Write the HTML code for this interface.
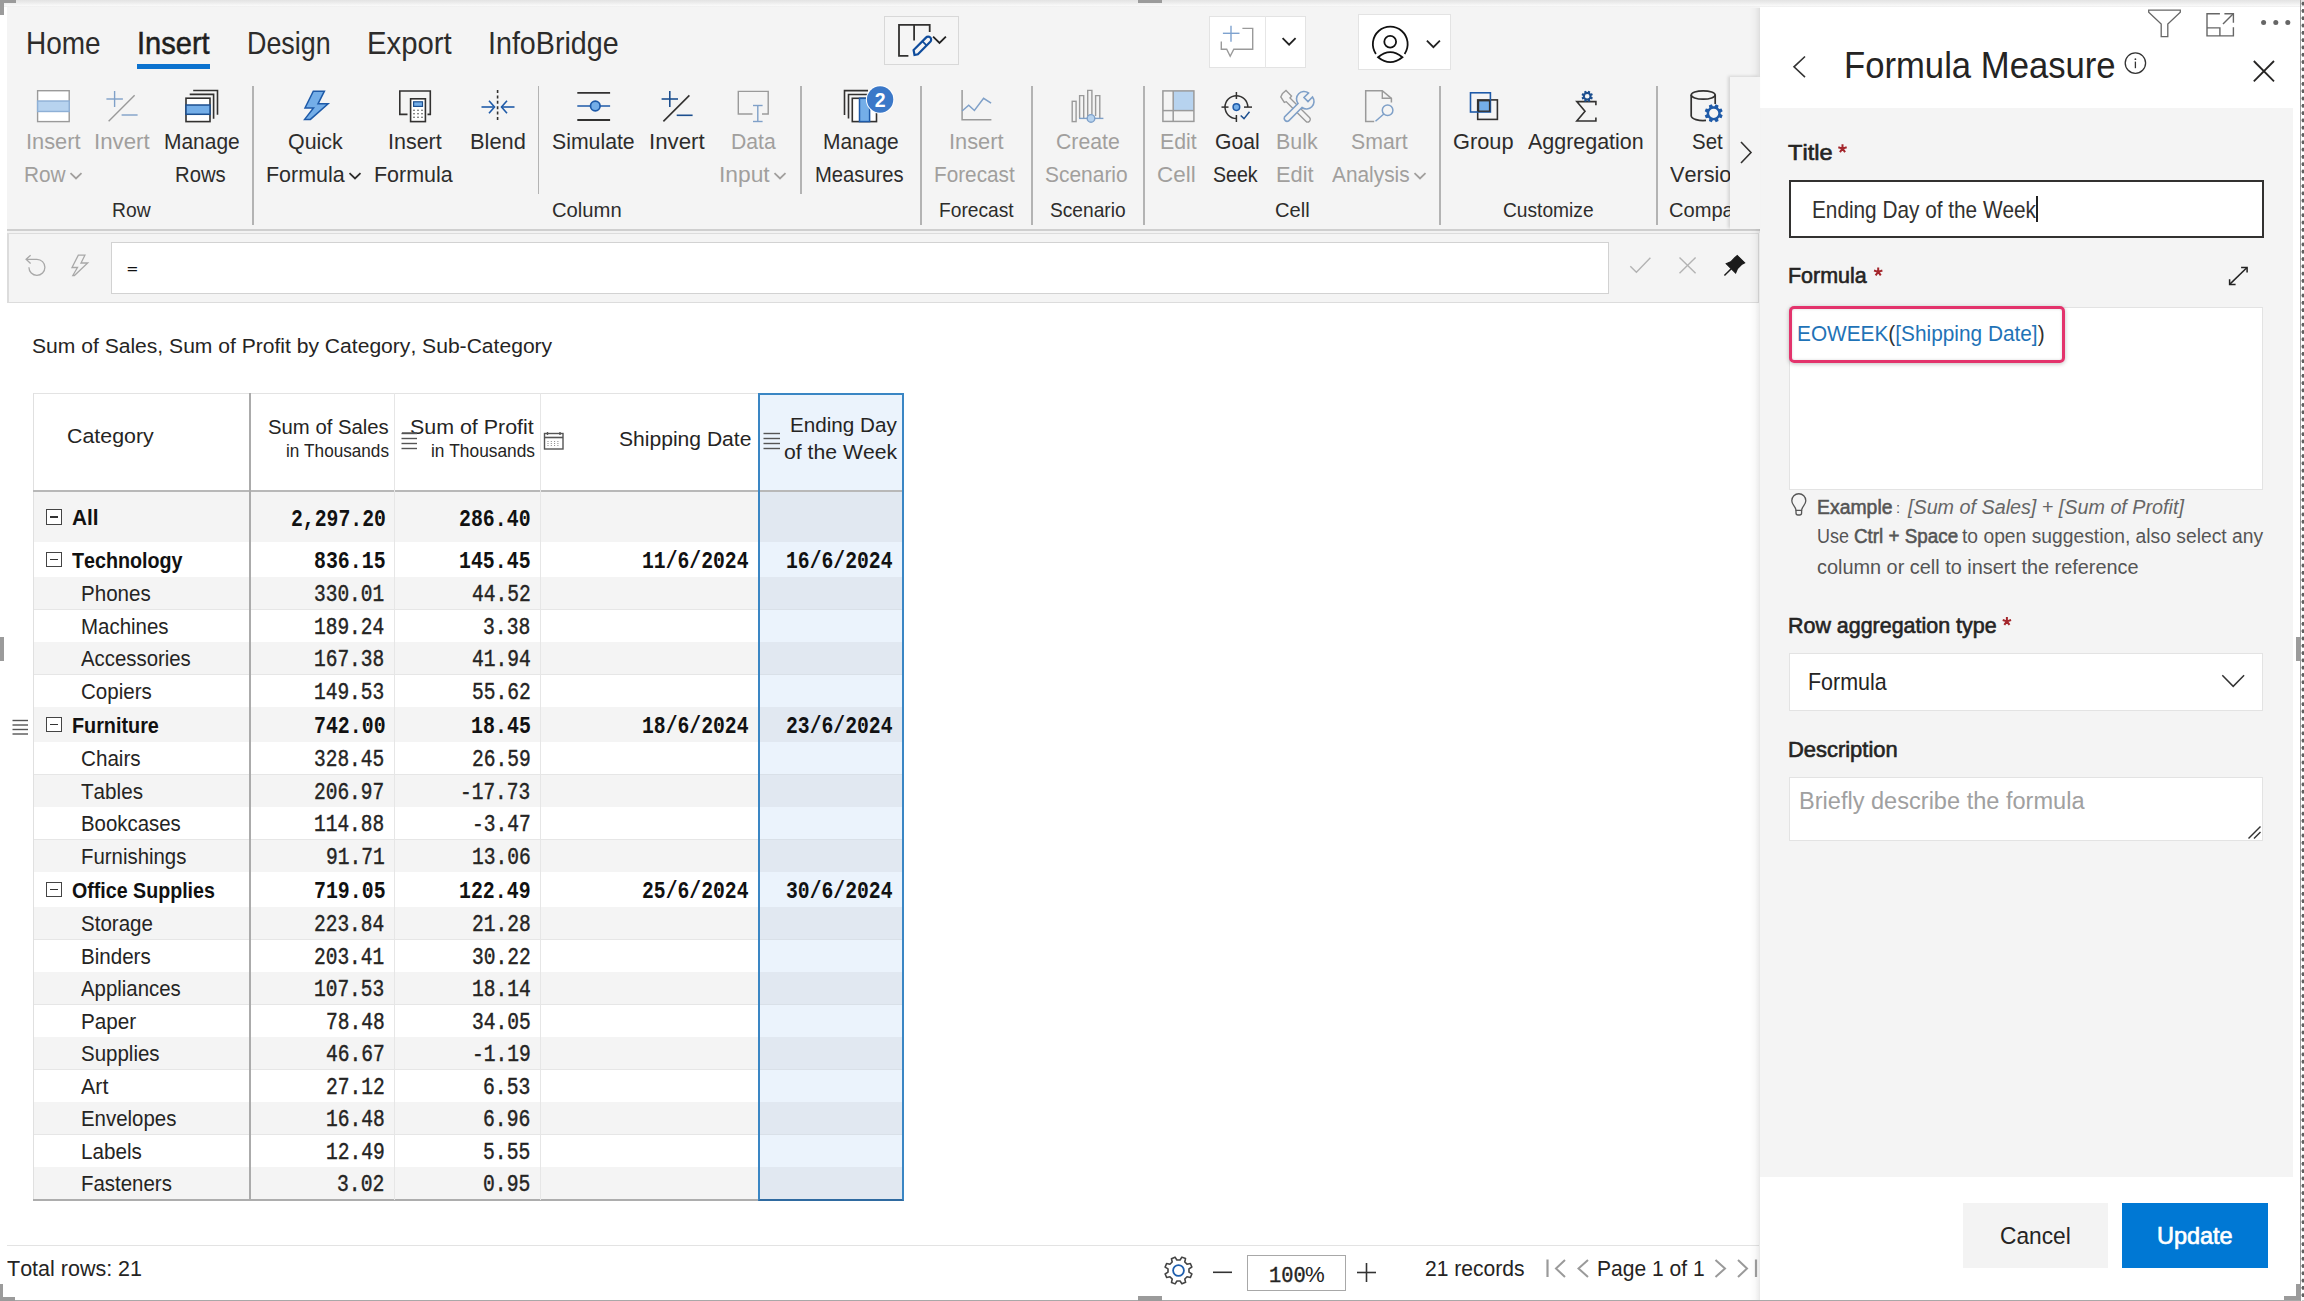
<!DOCTYPE html>
<html><head><meta charset="utf-8"><title>Formula Measure</title>
<style>
html,body{margin:0;padding:0;width:2304px;height:1301px;overflow:hidden;background:#fff}
body{position:relative;font-family:"Liberation Sans",sans-serif;font-kerning:none}
.t{position:absolute;line-height:1;white-space:nowrap;transform-origin:0 0}
.r{position:absolute;box-sizing:border-box}
svg.r{overflow:visible}
</style></head><body>
<div class="r" style="left:0.00px;top:0.00px;width:2304.00px;height:1301.00px;background:#fff"></div>
<div class="r" style="left:7.00px;top:7.00px;width:1753.00px;height:223.00px;background:#f4f4f4"></div>
<div class="r" style="left:0.00px;top:0.00px;width:2304.00px;height:7.00px;background:linear-gradient(#e3e3e3,#eeeeee 45%,#f8f8f8 78%,#ededed)"></div>
<div class="r" style="left:7.00px;top:229.40px;width:1753.00px;height:2.00px;background:#cfcfcf"></div>
<div class="r" style="left:7.00px;top:231.40px;width:1753.00px;height:1.60px;background:#f2f2f2"></div>
<div class="r" style="left:7.00px;top:233.00px;width:1752.00px;height:70.00px;background:#f4f4f4;border:1.2px solid #dcdcdc;border-left-width:2px;box-sizing:border-box"></div>
<div class="r" style="left:111.00px;top:242.00px;width:1498.00px;height:52.00px;background:#fff;border:1px solid #d2d2d2;box-sizing:border-box"></div>
<div class="r" style="left:7.00px;top:1244.50px;width:1752.00px;height:1.50px;background:#e3e3e3"></div>
<div class="r" style="left:1760.00px;top:7.00px;width:533.00px;height:100.50px;background:#fff"></div>
<div class="r" style="left:1760.00px;top:107.50px;width:533.00px;height:1069.50px;background:#f4f4f4"></div>
<div class="r" style="left:1749.00px;top:8.00px;width:11.00px;height:1293.00px;background:linear-gradient(90deg,rgba(0,0,0,0),rgba(0,0,0,0.025) 55%,rgba(0,0,0,0.07) 90%,rgba(0,0,0,0.1))"></div>
<div class="r" style="left:2300.00px;top:0.00px;width:1.00px;height:1301.00px;background:#9a9a9a"></div>
<div class="r" style="left:2301px;top:0;width:3px;height:1301px;background:radial-gradient(circle at 2.2px 3.6px,#606060 1.6px,transparent 1.9px) 0 0/3px 7.3px"></div>
<div class="r" style="left:0.00px;top:1299.50px;width:2300.00px;height:1.50px;background:#a8a8a8"></div>
<div class="r" style="left:0.00px;top:0.00px;width:15.50px;height:3.00px;background:#9b9b9b"></div>
<div class="r" style="left:0.00px;top:0.00px;width:3.50px;height:15.00px;background:#9b9b9b"></div>
<div class="r" style="left:0.00px;top:637.00px;width:3.50px;height:24.00px;background:#9b9b9b"></div>
<div class="r" style="left:0.00px;top:1284.00px;width:3.00px;height:17.00px;background:#9b9b9b"></div>
<div class="r" style="left:0.00px;top:1297.00px;width:15.00px;height:4.00px;background:#9b9b9b"></div>
<div class="r" style="left:1138.00px;top:0.00px;width:24.00px;height:3.00px;background:#9b9b9b"></div>
<div class="r" style="left:1138.00px;top:1296.00px;width:24.00px;height:5.00px;background:#9b9b9b"></div>
<div class="r" style="left:2296.00px;top:637.00px;width:4.50px;height:24.00px;background:#9b9b9b"></div>
<div class="r" style="left:2296.00px;top:1284.00px;width:4.50px;height:16.00px;background:#9b9b9b"></div>
<div class="r" style="left:2283.50px;top:1296.00px;width:17.00px;height:4.00px;background:#9b9b9b"></div>
<div class="t" style="left:26.00px;top:28.15px;font-size:30.52px;font-family:'Liberation Sans', sans-serif;color:#2d2c2b;transform:scaleX(0.9173);">Home</div>
<div class="t" style="left:247.00px;top:28.15px;font-size:30.52px;font-family:'Liberation Sans', sans-serif;color:#2d2c2b;transform:scaleX(0.8809);">Design</div>
<div class="t" style="left:367.00px;top:28.15px;font-size:30.52px;font-family:'Liberation Sans', sans-serif;color:#2d2c2b;transform:scaleX(0.9602);">Export</div>
<div class="t" style="left:488.00px;top:28.15px;font-size:30.52px;font-family:'Liberation Sans', sans-serif;color:#2d2c2b;transform:scaleX(0.9392);">InfoBridge</div>
<div class="t" style="left:137.00px;top:28.15px;font-size:30.52px;font-family:'Liberation Sans', sans-serif;color:#201f1e;transform:scaleX(0.9523);-webkit-text-stroke:0.5px #201f1e;">Insert</div>
<div class="r" style="left:137.00px;top:64.00px;width:73.00px;height:5.00px;background:#0b72cf"></div>
<div class="r" style="left:252.25px;top:86.00px;width:1.50px;height:139.00px;background:#b3b3b3"></div>
<div class="r" style="left:537.75px;top:86.00px;width:1.50px;height:108.00px;background:#b3b3b3"></div>
<div class="r" style="left:800.25px;top:86.00px;width:1.50px;height:108.00px;background:#b3b3b3"></div>
<div class="r" style="left:920.25px;top:86.00px;width:1.50px;height:139.00px;background:#b3b3b3"></div>
<div class="r" style="left:1031.25px;top:86.00px;width:1.50px;height:139.00px;background:#b3b3b3"></div>
<div class="r" style="left:1143.25px;top:86.00px;width:1.50px;height:139.00px;background:#b3b3b3"></div>
<div class="r" style="left:1439.25px;top:86.00px;width:1.50px;height:139.00px;background:#b3b3b3"></div>
<div class="r" style="left:1656.25px;top:86.00px;width:1.50px;height:139.00px;background:#b3b3b3"></div>
<div class="t" style="left:26.00px;top:130.53px;font-size:21.80px;font-family:'Liberation Sans', sans-serif;color:#a19f9d;">Insert</div>
<div class="t" style="left:24.00px;top:163.53px;font-size:21.80px;font-family:'Liberation Sans', sans-serif;color:#a19f9d;transform:scaleX(0.9549);">Row</div>
<svg class="r" style="left:69.00px;top:172.00px;" width="14.00" height="8.00" viewBox="0 0 14 8" fill="none"><path d="M1.5 1.2 L7 6.5 L12.5 1.2" stroke="#a19f9d" stroke-width="1.8"/></svg>
<div class="t" style="left:94.00px;top:130.53px;font-size:21.80px;font-family:'Liberation Sans', sans-serif;color:#a19f9d;transform:scaleX(1.0215);">Invert</div>
<div class="t" style="left:164.00px;top:130.53px;font-size:21.80px;font-family:'Liberation Sans', sans-serif;color:#2d2c2b;transform:scaleX(0.9607);">Manage</div>
<div class="t" style="left:175.00px;top:163.53px;font-size:21.80px;font-family:'Liberation Sans', sans-serif;color:#2d2c2b;transform:scaleX(0.9298);">Rows</div>
<div class="t" style="left:288.00px;top:130.53px;font-size:21.80px;font-family:'Liberation Sans', sans-serif;color:#2d2c2b;transform:scaleX(0.9808);">Quick</div>
<div class="t" style="left:266.00px;top:163.53px;font-size:21.80px;font-family:'Liberation Sans', sans-serif;color:#2d2c2b;transform:scaleX(0.9841);">Formula</div>
<svg class="r" style="left:348.00px;top:172.00px;" width="14.00" height="8.00" viewBox="0 0 14 8" fill="none"><path d="M1.5 1.2 L7 6.5 L12.5 1.2" stroke="#2d2c2b" stroke-width="1.8"/></svg>
<div class="t" style="left:388.00px;top:130.53px;font-size:21.80px;font-family:'Liberation Sans', sans-serif;color:#2d2c2b;transform:scaleX(0.9848);">Insert</div>
<div class="t" style="left:374.00px;top:163.53px;font-size:21.80px;font-family:'Liberation Sans', sans-serif;color:#2d2c2b;transform:scaleX(0.9841);">Formula</div>
<div class="t" style="left:470.00px;top:130.53px;font-size:21.80px;font-family:'Liberation Sans', sans-serif;color:#2d2c2b;">Blend</div>
<div class="t" style="left:552.00px;top:130.53px;font-size:21.80px;font-family:'Liberation Sans', sans-serif;color:#2d2c2b;transform:scaleX(0.9749);">Simulate</div>
<div class="t" style="left:649.00px;top:130.53px;font-size:21.80px;font-family:'Liberation Sans', sans-serif;color:#2d2c2b;transform:scaleX(1.0215);">Invert</div>
<div class="t" style="left:731.00px;top:130.53px;font-size:21.80px;font-family:'Liberation Sans', sans-serif;color:#a19f9d;transform:scaleX(0.9703);">Data</div>
<div class="t" style="left:719.00px;top:163.53px;font-size:21.80px;font-family:'Liberation Sans', sans-serif;color:#a19f9d;transform:scaleX(1.0456);">Input</div>
<svg class="r" style="left:773.00px;top:172.00px;" width="14.00" height="8.00" viewBox="0 0 14 8" fill="none"><path d="M1.5 1.2 L7 6.5 L12.5 1.2" stroke="#a19f9d" stroke-width="1.8"/></svg>
<div class="t" style="left:823.00px;top:130.53px;font-size:21.80px;font-family:'Liberation Sans', sans-serif;color:#2d2c2b;transform:scaleX(0.9607);">Manage</div>
<div class="t" style="left:815.00px;top:163.53px;font-size:21.80px;font-family:'Liberation Sans', sans-serif;color:#2d2c2b;transform:scaleX(0.9265);">Measures</div>
<div class="t" style="left:949.00px;top:130.53px;font-size:21.80px;font-family:'Liberation Sans', sans-serif;color:#a19f9d;">Insert</div>
<div class="t" style="left:934.00px;top:163.53px;font-size:21.80px;font-family:'Liberation Sans', sans-serif;color:#a19f9d;transform:scaleX(0.9515);">Forecast</div>
<div class="t" style="left:1056.00px;top:130.53px;font-size:21.80px;font-family:'Liberation Sans', sans-serif;color:#a19f9d;transform:scaleX(0.9736);">Create</div>
<div class="t" style="left:1045.00px;top:163.53px;font-size:21.80px;font-family:'Liberation Sans', sans-serif;color:#a19f9d;transform:scaleX(0.9610);">Scenario</div>
<div class="t" style="left:1160.00px;top:130.53px;font-size:21.80px;font-family:'Liberation Sans', sans-serif;color:#a19f9d;transform:scaleX(0.9770);">Edit</div>
<div class="t" style="left:1157.00px;top:163.53px;font-size:21.80px;font-family:'Liberation Sans', sans-serif;color:#a19f9d;transform:scaleX(1.0302);">Cell</div>
<div class="t" style="left:1215.00px;top:130.53px;font-size:21.80px;font-family:'Liberation Sans', sans-serif;color:#2d2c2b;transform:scaleX(0.9708);">Goal</div>
<div class="t" style="left:1213.00px;top:163.53px;font-size:21.80px;font-family:'Liberation Sans', sans-serif;color:#2d2c2b;transform:scaleX(0.8988);">Seek</div>
<div class="t" style="left:1276.00px;top:130.53px;font-size:21.80px;font-family:'Liberation Sans', sans-serif;color:#a19f9d;transform:scaleX(0.9824);">Bulk</div>
<div class="t" style="left:1276.00px;top:163.53px;font-size:21.80px;font-family:'Liberation Sans', sans-serif;color:#a19f9d;">Edit</div>
<div class="t" style="left:1351.00px;top:130.53px;font-size:21.80px;font-family:'Liberation Sans', sans-serif;color:#a19f9d;transform:scaleX(0.9751);">Smart</div>
<div class="t" style="left:1332.00px;top:163.53px;font-size:21.80px;font-family:'Liberation Sans', sans-serif;color:#a19f9d;transform:scaleX(0.9570);">Analysis</div>
<svg class="r" style="left:1413.00px;top:172.00px;" width="14.00" height="8.00" viewBox="0 0 14 8" fill="none"><path d="M1.5 1.2 L7 6.5 L12.5 1.2" stroke="#a19f9d" stroke-width="1.8"/></svg>
<div class="t" style="left:1453.00px;top:130.53px;font-size:21.80px;font-family:'Liberation Sans', sans-serif;color:#2d2c2b;">Group</div>
<div class="t" style="left:1528.00px;top:130.53px;font-size:21.80px;font-family:'Liberation Sans', sans-serif;color:#2d2c2b;transform:scaleX(0.9840);">Aggregation</div>
<div class="t" style="left:1692.00px;top:130.53px;font-size:21.80px;font-family:'Liberation Sans', sans-serif;color:#2d2c2b;transform:scaleX(0.9381);">Set</div>
<div class="t" style="left:112.00px;top:201.38px;font-size:19.62px;font-family:'Liberation Sans', sans-serif;color:#2d2c2b;transform:scaleX(0.9847);">Row</div>
<div class="t" style="left:552.00px;top:201.38px;font-size:19.62px;font-family:'Liberation Sans', sans-serif;color:#2d2c2b;transform:scaleX(1.0308);">Column</div>
<div class="t" style="left:939.00px;top:201.38px;font-size:19.62px;font-family:'Liberation Sans', sans-serif;color:#2d2c2b;transform:scaleX(0.9786);">Forecast</div>
<div class="t" style="left:1050.00px;top:201.38px;font-size:19.62px;font-family:'Liberation Sans', sans-serif;color:#2d2c2b;transform:scaleX(0.9774);">Scenario</div>
<div class="t" style="left:1275.00px;top:201.38px;font-size:19.62px;font-family:'Liberation Sans', sans-serif;color:#2d2c2b;transform:scaleX(1.0264);">Cell</div>
<div class="t" style="left:1503.00px;top:201.38px;font-size:19.62px;font-family:'Liberation Sans', sans-serif;color:#2d2c2b;transform:scaleX(0.9785);">Customize</div>
<div class="r" style="left:1660px;top:150px;width:71px;height:80px;overflow:hidden"><div class="t" style="left:10.00px;top:13.53px;font-size:21.80px;font-family:'Liberation Sans', sans-serif;color:#2d2c2b;transform:scaleX(0.9930);">Version</div><div class="t" style="left:9.00px;top:51.38px;font-size:19.62px;font-family:'Liberation Sans', sans-serif;color:#2d2c2b;transform:scaleX(1.0247);">Compare</div></div>
<div class="r" style="left:1730.00px;top:76.50px;width:30.00px;height:152.50px;background:#f4f4f4;box-shadow:-2px -1px 3px rgba(0,0,0,0.13)"></div>
<svg class="r" style="left:1738.00px;top:140.00px;" width="16.00" height="25.00" viewBox="0 0 16 25" fill="none"><path d="M3 2 L13 12.5 L3 23" stroke="#323130" stroke-width="1.6"/></svg>
<div class="r" style="left:884.00px;top:16.00px;width:75.00px;height:49.00px;background:#f5f5f5;border:1.5px solid #d8d8d8;box-sizing:border-box"></div>
<div class="r" style="left:1209.00px;top:16.00px;width:97.00px;height:52.00px;background:#fff;border:1.5px solid #e3e3e3;box-sizing:border-box"></div>
<div class="r" style="left:1264.50px;top:16.00px;width:1.50px;height:52.00px;background:#e6e6e6"></div>
<div class="r" style="left:1358.00px;top:14.00px;width:93.00px;height:56.00px;background:#fff;border:1.5px solid #e3e3e3;box-sizing:border-box"></div>
<div class="t" style="left:127.00px;top:265.38px;font-size:10.17px;font-family:'Liberation Sans', sans-serif;color:#111;font-weight:bold;transform:scaleX(1.8008);">=</div>
<div class="t" style="left:32.00px;top:335.15px;font-size:21.08px;font-family:'Liberation Sans', sans-serif;color:#252423;">Sum of Sales, Sum of Profit by Category, Sub-Category</div>
<div class="t" style="left:7.00px;top:1257.92px;font-size:22.53px;font-family:'Liberation Sans', sans-serif;color:#252423;transform:scaleX(0.9548);">Total rows: 21</div>
<div class="t" style="left:1425.00px;top:1257.92px;font-size:22.53px;font-family:'Liberation Sans', sans-serif;color:#252423;transform:scaleX(0.9366);">21 records</div>
<div class="t" style="left:1597.00px;top:1257.92px;font-size:22.53px;font-family:'Liberation Sans', sans-serif;color:#252423;transform:scaleX(0.9346);">Page 1 of 1</div>
<div class="r" style="left:1247.00px;top:1255.00px;width:99.00px;height:36.00px;background:#fff;border:1.5px solid #a8a8a8;box-sizing:border-box"></div>
<div class="t" style="left:1269.00px;top:1264.56px;font-size:22.76px;font-family:'Liberation Mono', monospace;color:#252423;transform:scaleX(0.8958);-webkit-text-stroke:0.4px #252423;">100</div>
<div class="t" style="left:1305.00px;top:1263.53px;font-size:21.80px;font-family:'Liberation Sans', sans-serif;color:#252423;transform:scaleX(1.0164);">%</div>
<div class="t" style="left:1844.00px;top:47.72px;font-size:36.34px;font-family:'Liberation Sans', sans-serif;color:#252423;transform:scaleX(0.9542);">Formula Measure</div>
<div class="t" style="left:1788.00px;top:141.92px;font-size:22.53px;font-family:'Liberation Sans', sans-serif;color:#252423;transform:scaleX(1.0474);-webkit-text-stroke:0.63px #252423;">Title</div>
<div class="r" style="left:1789.00px;top:180.00px;width:475.00px;height:58.00px;background:#fff;border:2px solid #323130;box-sizing:border-box"></div>
<div class="t" style="left:1812.00px;top:198.07px;font-size:24.71px;font-family:'Liberation Sans', sans-serif;color:#323130;transform:scaleX(0.8408);">Ending Day of the Week</div>
<div class="r" style="left:2036.00px;top:196.00px;width:2.00px;height:26.00px;background:#222"></div>
<div class="t" style="left:1788.00px;top:264.92px;font-size:22.53px;font-family:'Liberation Sans', sans-serif;color:#252423;transform:scaleX(0.9524);-webkit-text-stroke:0.63px #252423;">Formula</div>
<div class="r" style="left:1789.00px;top:307.00px;width:474.00px;height:183.00px;background:#fff;border:1.5px solid #e3e3e3;box-sizing:border-box"></div>
<div class="r" style="left:1789.00px;top:305.50px;width:275.50px;height:57.50px;border:3px solid #e3336c;border-radius:5px;box-sizing:border-box;box-shadow:0 1px 4px rgba(0,0,0,0.25), inset 0 0 3px rgba(0,0,0,0.15)"></div>
<div class="t" style="left:1797.00px;top:322.92px;font-size:22.53px;font-family:'Liberation Sans', sans-serif;color:#1f73b7;transform:scaleX(0.9244);">EOWEEK<span style="color:#323130">(</span>[Shipping Date]<span style="color:#323130">)</span></div>
<div class="t" style="left:1817.40px;top:496.76px;font-size:20.35px;font-family:'Liberation Sans', sans-serif;color:#555;transform:scaleX(0.9536);-webkit-text-stroke:0.57px #555;">Example</div>
<div class="t" style="left:1896.00px;top:502.30px;font-size:13.81px;font-family:'Liberation Sans', sans-serif;color:#555;transform:scaleX(1.0681);">:</div>
<div class="t" style="left:1908.39px;top:496.76px;font-size:20.35px;font-family:'Liberation Sans', sans-serif;color:#666;font-style:italic;transform:scaleX(0.9701);">[Sum of Sales] + [Sum of Profit]</div>
<div class="t" style="left:1817.40px;top:526.26px;font-size:20.35px;font-family:'Liberation Sans', sans-serif;color:#555;transform:scaleX(0.8817);">Use</div>
<div class="t" style="left:1853.80px;top:526.26px;font-size:20.35px;font-family:'Liberation Sans', sans-serif;color:#555;transform:scaleX(0.9260);-webkit-text-stroke:0.57px #555;">Ctrl + Space</div>
<div class="t" style="left:1961.50px;top:526.26px;font-size:20.35px;font-family:'Liberation Sans', sans-serif;color:#555;transform:scaleX(0.9475);">to open suggestion, also select any</div>
<div class="t" style="left:1817.00px;top:557.26px;font-size:20.35px;font-family:'Liberation Sans', sans-serif;color:#555;transform:scaleX(0.9774);">column or cell to insert the reference</div>
<div class="t" style="left:1788.00px;top:614.92px;font-size:22.53px;font-family:'Liberation Sans', sans-serif;color:#252423;transform:scaleX(0.9522);-webkit-text-stroke:0.63px #252423;">Row aggregation type</div>
<div class="r" style="left:1789.00px;top:653.00px;width:474.00px;height:57.50px;background:#fff;border:1.5px solid #e3e3e3;box-sizing:border-box"></div>
<div class="t" style="left:1808.00px;top:671.30px;font-size:23.26px;font-family:'Liberation Sans', sans-serif;color:#252423;transform:scaleX(0.9226);">Formula</div>
<div class="t" style="left:1788.00px;top:738.92px;font-size:22.53px;font-family:'Liberation Sans', sans-serif;color:#252423;transform:scaleX(0.9735);-webkit-text-stroke:0.63px #252423;">Description</div>
<div class="r" style="left:1789.00px;top:776.50px;width:474.00px;height:64.50px;background:#fff;border:1.5px solid #e3e3e3;box-sizing:border-box"></div>
<div class="t" style="left:1799.00px;top:788.69px;font-size:23.98px;font-family:'Liberation Sans', sans-serif;color:#a0a0a0;transform:scaleX(0.9831);">Briefly describe the formula</div>
<div class="r" style="left:1963.00px;top:1203.00px;width:145.00px;height:65.00px;background:#f3f3f3"></div>
<div class="t" style="left:2000.00px;top:1224.07px;font-size:24.71px;font-family:'Liberation Sans', sans-serif;color:#252423;transform:scaleX(0.9191);">Cancel</div>
<div class="r" style="left:2122.00px;top:1203.00px;width:145.50px;height:65.00px;background:#0078d4"></div>
<div class="t" style="left:2157.00px;top:1224.07px;font-size:24.71px;font-family:'Liberation Sans', sans-serif;color:#fff;transform:scaleX(0.9500);-webkit-text-stroke:0.69px #fff;">Update</div>
<div class="r" style="left:33.00px;top:393.00px;width:725.00px;height:1.00px;background:#e3e3e3"></div>
<div class="r" style="left:33.00px;top:393.00px;width:1.00px;height:808.00px;background:#e0e0e0"></div>
<div class="r" style="left:34.00px;top:492.00px;width:870.00px;height:50.00px;background:#f4f4f4"></div>
<div class="r" style="left:34.00px;top:542.00px;width:870.00px;height:35.00px;background:#ffffff"></div>
<div class="r" style="left:34.00px;top:577.00px;width:870.00px;height:32.50px;background:#f4f4f4"></div>
<div class="r" style="left:34.00px;top:609.10px;width:870.00px;height:1.00px;background:#e6e6e6"></div>
<div class="r" style="left:34.00px;top:609.50px;width:870.00px;height:32.50px;background:#ffffff"></div>
<div class="r" style="left:34.00px;top:641.60px;width:870.00px;height:1.00px;background:#e6e6e6"></div>
<div class="r" style="left:34.00px;top:642.00px;width:870.00px;height:32.50px;background:#f4f4f4"></div>
<div class="r" style="left:34.00px;top:674.10px;width:870.00px;height:1.00px;background:#e6e6e6"></div>
<div class="r" style="left:34.00px;top:674.50px;width:870.00px;height:32.50px;background:#ffffff"></div>
<div class="r" style="left:34.00px;top:706.60px;width:870.00px;height:1.00px;background:#e6e6e6"></div>
<div class="r" style="left:34.00px;top:707.00px;width:870.00px;height:35.00px;background:#f4f4f4"></div>
<div class="r" style="left:34.00px;top:742.00px;width:870.00px;height:32.50px;background:#ffffff"></div>
<div class="r" style="left:34.00px;top:774.10px;width:870.00px;height:1.00px;background:#e6e6e6"></div>
<div class="r" style="left:34.00px;top:774.50px;width:870.00px;height:32.50px;background:#f4f4f4"></div>
<div class="r" style="left:34.00px;top:806.60px;width:870.00px;height:1.00px;background:#e6e6e6"></div>
<div class="r" style="left:34.00px;top:807.00px;width:870.00px;height:32.50px;background:#ffffff"></div>
<div class="r" style="left:34.00px;top:839.10px;width:870.00px;height:1.00px;background:#e6e6e6"></div>
<div class="r" style="left:34.00px;top:839.50px;width:870.00px;height:32.50px;background:#f4f4f4"></div>
<div class="r" style="left:34.00px;top:871.60px;width:870.00px;height:1.00px;background:#e6e6e6"></div>
<div class="r" style="left:34.00px;top:872.00px;width:870.00px;height:35.00px;background:#ffffff"></div>
<div class="r" style="left:34.00px;top:907.00px;width:870.00px;height:32.50px;background:#f4f4f4"></div>
<div class="r" style="left:34.00px;top:939.10px;width:870.00px;height:1.00px;background:#e6e6e6"></div>
<div class="r" style="left:34.00px;top:939.50px;width:870.00px;height:32.50px;background:#ffffff"></div>
<div class="r" style="left:34.00px;top:971.60px;width:870.00px;height:1.00px;background:#e6e6e6"></div>
<div class="r" style="left:34.00px;top:972.00px;width:870.00px;height:32.50px;background:#f4f4f4"></div>
<div class="r" style="left:34.00px;top:1004.10px;width:870.00px;height:1.00px;background:#e6e6e6"></div>
<div class="r" style="left:34.00px;top:1004.50px;width:870.00px;height:32.50px;background:#ffffff"></div>
<div class="r" style="left:34.00px;top:1036.60px;width:870.00px;height:1.00px;background:#e6e6e6"></div>
<div class="r" style="left:34.00px;top:1037.00px;width:870.00px;height:32.50px;background:#f4f4f4"></div>
<div class="r" style="left:34.00px;top:1069.10px;width:870.00px;height:1.00px;background:#e6e6e6"></div>
<div class="r" style="left:34.00px;top:1069.50px;width:870.00px;height:32.50px;background:#ffffff"></div>
<div class="r" style="left:34.00px;top:1101.60px;width:870.00px;height:1.00px;background:#e6e6e6"></div>
<div class="r" style="left:34.00px;top:1102.00px;width:870.00px;height:32.50px;background:#f4f4f4"></div>
<div class="r" style="left:34.00px;top:1134.10px;width:870.00px;height:1.00px;background:#e6e6e6"></div>
<div class="r" style="left:34.00px;top:1134.50px;width:870.00px;height:32.50px;background:#ffffff"></div>
<div class="r" style="left:34.00px;top:1166.60px;width:870.00px;height:1.00px;background:#e6e6e6"></div>
<div class="r" style="left:34.00px;top:1167.00px;width:870.00px;height:32.50px;background:#f4f4f4"></div>
<div class="r" style="left:34.00px;top:1199.10px;width:870.00px;height:1.00px;background:#e6e6e6"></div>
<div class="r" style="left:758.00px;top:492.00px;width:146.00px;height:50.00px;background:#e1e8f1"></div>
<div class="r" style="left:758.00px;top:542.00px;width:146.00px;height:35.00px;background:#ebf3fc"></div>
<div class="r" style="left:758.00px;top:577.00px;width:146.00px;height:32.50px;background:#e1e8f1"></div>
<div class="r" style="left:758.00px;top:609.10px;width:146.00px;height:1.00px;background:#d9e0e8"></div>
<div class="r" style="left:758.00px;top:609.50px;width:146.00px;height:32.50px;background:#ebf3fc"></div>
<div class="r" style="left:758.00px;top:641.60px;width:146.00px;height:1.00px;background:#d9e0e8"></div>
<div class="r" style="left:758.00px;top:642.00px;width:146.00px;height:32.50px;background:#e1e8f1"></div>
<div class="r" style="left:758.00px;top:674.10px;width:146.00px;height:1.00px;background:#d9e0e8"></div>
<div class="r" style="left:758.00px;top:674.50px;width:146.00px;height:32.50px;background:#ebf3fc"></div>
<div class="r" style="left:758.00px;top:706.60px;width:146.00px;height:1.00px;background:#d9e0e8"></div>
<div class="r" style="left:758.00px;top:707.00px;width:146.00px;height:35.00px;background:#e1e8f1"></div>
<div class="r" style="left:758.00px;top:742.00px;width:146.00px;height:32.50px;background:#ebf3fc"></div>
<div class="r" style="left:758.00px;top:774.10px;width:146.00px;height:1.00px;background:#d9e0e8"></div>
<div class="r" style="left:758.00px;top:774.50px;width:146.00px;height:32.50px;background:#e1e8f1"></div>
<div class="r" style="left:758.00px;top:806.60px;width:146.00px;height:1.00px;background:#d9e0e8"></div>
<div class="r" style="left:758.00px;top:807.00px;width:146.00px;height:32.50px;background:#ebf3fc"></div>
<div class="r" style="left:758.00px;top:839.10px;width:146.00px;height:1.00px;background:#d9e0e8"></div>
<div class="r" style="left:758.00px;top:839.50px;width:146.00px;height:32.50px;background:#e1e8f1"></div>
<div class="r" style="left:758.00px;top:871.60px;width:146.00px;height:1.00px;background:#d9e0e8"></div>
<div class="r" style="left:758.00px;top:872.00px;width:146.00px;height:35.00px;background:#ebf3fc"></div>
<div class="r" style="left:758.00px;top:907.00px;width:146.00px;height:32.50px;background:#e1e8f1"></div>
<div class="r" style="left:758.00px;top:939.10px;width:146.00px;height:1.00px;background:#d9e0e8"></div>
<div class="r" style="left:758.00px;top:939.50px;width:146.00px;height:32.50px;background:#ebf3fc"></div>
<div class="r" style="left:758.00px;top:971.60px;width:146.00px;height:1.00px;background:#d9e0e8"></div>
<div class="r" style="left:758.00px;top:972.00px;width:146.00px;height:32.50px;background:#e1e8f1"></div>
<div class="r" style="left:758.00px;top:1004.10px;width:146.00px;height:1.00px;background:#d9e0e8"></div>
<div class="r" style="left:758.00px;top:1004.50px;width:146.00px;height:32.50px;background:#ebf3fc"></div>
<div class="r" style="left:758.00px;top:1036.60px;width:146.00px;height:1.00px;background:#d9e0e8"></div>
<div class="r" style="left:758.00px;top:1037.00px;width:146.00px;height:32.50px;background:#e1e8f1"></div>
<div class="r" style="left:758.00px;top:1069.10px;width:146.00px;height:1.00px;background:#d9e0e8"></div>
<div class="r" style="left:758.00px;top:1069.50px;width:146.00px;height:32.50px;background:#ebf3fc"></div>
<div class="r" style="left:758.00px;top:1101.60px;width:146.00px;height:1.00px;background:#d9e0e8"></div>
<div class="r" style="left:758.00px;top:1102.00px;width:146.00px;height:32.50px;background:#e1e8f1"></div>
<div class="r" style="left:758.00px;top:1134.10px;width:146.00px;height:1.00px;background:#d9e0e8"></div>
<div class="r" style="left:758.00px;top:1134.50px;width:146.00px;height:32.50px;background:#ebf3fc"></div>
<div class="r" style="left:758.00px;top:1166.60px;width:146.00px;height:1.00px;background:#d9e0e8"></div>
<div class="r" style="left:758.00px;top:1167.00px;width:146.00px;height:32.50px;background:#e1e8f1"></div>
<div class="r" style="left:758.00px;top:1199.10px;width:146.00px;height:1.00px;background:#d9e0e8"></div>
<div class="r" style="left:758.00px;top:393.00px;width:146.00px;height:98.00px;background:#ebf3fc"></div>
<div class="r" style="left:33.00px;top:490.00px;width:871.00px;height:2.00px;background:#b8b8b8"></div>
<div class="r" style="left:33.00px;top:1199.00px;width:871.00px;height:1.50px;background:#adadad"></div>
<div class="r" style="left:249.00px;top:393.00px;width:2.00px;height:806.50px;background:#ababab"></div>
<div class="r" style="left:394.00px;top:393.00px;width:1.00px;height:806.50px;background:#e6e6e6"></div>
<div class="r" style="left:539.50px;top:393.00px;width:1.00px;height:806.50px;background:#e6e6e6"></div>
<div class="r" style="left:758.00px;top:392.50px;width:146.00px;height:808.00px;border:2px solid #3a86c4;border-bottom-color:#2f6aa0;box-sizing:border-box"></div>
<div class="t" style="left:67.00px;top:425.15px;font-size:21.08px;font-family:'Liberation Sans', sans-serif;color:#252423;transform:scaleX(1.0137);">Category</div>
<div class="t" style="left:268.00px;top:416.15px;font-size:21.08px;font-family:'Liberation Sans', sans-serif;color:#252423;transform:scaleX(0.9630);">Sum of Sales</div>
<div class="t" style="left:286.00px;top:442.00px;font-size:18.90px;font-family:'Liberation Sans', sans-serif;color:#252423;transform:scaleX(0.9080);">in Thousands</div>
<div class="t" style="left:410.00px;top:416.15px;font-size:21.08px;font-family:'Liberation Sans', sans-serif;color:#252423;transform:scaleX(1.0155);">Sum of Profit</div>
<div class="t" style="left:431.00px;top:442.00px;font-size:18.90px;font-family:'Liberation Sans', sans-serif;color:#252423;transform:scaleX(0.9168);">in Thousands</div>
<div class="t" style="left:619.00px;top:428.15px;font-size:21.08px;font-family:'Liberation Sans', sans-serif;color:#252423;">Shipping Date</div>
<div class="t" style="left:790.00px;top:413.65px;font-size:21.08px;font-family:'Liberation Sans', sans-serif;color:#252423;transform:scaleX(0.9793);">Ending Day</div>
<div class="t" style="left:784.00px;top:441.15px;font-size:21.08px;font-family:'Liberation Sans', sans-serif;color:#252423;transform:scaleX(1.0052);">of the Week</div>
<div class="t" style="left:72.00px;top:507.23px;font-size:21.80px;font-family:'Liberation Sans', sans-serif;color:#111;font-weight:bold;transform:scaleX(0.9510);">All</div>
<div class="r" style="left:46.00px;top:509.30px;width:15.50px;height:15.50px;border:1.5px solid #444;box-sizing:border-box;background:#fff"></div>
<div class="r" style="left:49.50px;top:516.40px;width:8.50px;height:1.50px;background:#333"></div>
<div class="t" style="left:290.84px;top:507.68px;font-size:23.52px;font-family:'Liberation Mono', monospace;color:#111;font-weight:bold;transform:scaleX(0.8401);">2,297.20</div>
<div class="t" style="left:459.12px;top:507.68px;font-size:23.52px;font-family:'Liberation Mono', monospace;color:#111;font-weight:bold;transform:scaleX(0.8451);">286.40</div>
<div class="t" style="left:72.00px;top:549.73px;font-size:21.80px;font-family:'Liberation Sans', sans-serif;color:#111;font-weight:bold;transform:scaleX(0.9041);">Technology</div>
<div class="r" style="left:46.00px;top:551.80px;width:15.50px;height:15.50px;border:1.5px solid #444;box-sizing:border-box;background:#fff"></div>
<div class="r" style="left:49.50px;top:558.90px;width:8.50px;height:1.50px;background:#333"></div>
<div class="t" style="left:314.12px;top:550.18px;font-size:23.52px;font-family:'Liberation Mono', monospace;color:#111;font-weight:bold;transform:scaleX(0.8451);">836.15</div>
<div class="t" style="left:459.12px;top:550.18px;font-size:23.52px;font-family:'Liberation Mono', monospace;color:#111;font-weight:bold;transform:scaleX(0.8451);">145.45</div>
<div class="t" style="left:641.70px;top:550.18px;font-size:23.52px;font-family:'Liberation Mono', monospace;color:#111;font-weight:bold;transform:scaleX(0.8384);">11/6/2024</div>
<div class="t" style="left:786.20px;top:550.18px;font-size:23.52px;font-family:'Liberation Mono', monospace;color:#111;font-weight:bold;transform:scaleX(0.8384);">16/6/2024</div>
<div class="t" style="left:81.00px;top:583.48px;font-size:21.80px;font-family:'Liberation Sans', sans-serif;color:#252423;transform:scaleX(0.9430);">Phones</div>
<div class="t" style="left:314.48px;top:584.28px;font-size:23.07px;font-family:'Liberation Mono', monospace;color:#252423;transform:scaleX(0.8455);-webkit-text-stroke:0.4px #252423;">330.01</div>
<div class="t" style="left:471.91px;top:584.28px;font-size:23.07px;font-family:'Liberation Mono', monospace;color:#252423;transform:scaleX(0.8496);-webkit-text-stroke:0.4px #252423;">44.52</div>
<div class="t" style="left:81.00px;top:615.98px;font-size:21.80px;font-family:'Liberation Sans', sans-serif;color:#252423;transform:scaleX(0.9382);">Machines</div>
<div class="t" style="left:314.48px;top:616.78px;font-size:23.07px;font-family:'Liberation Mono', monospace;color:#252423;transform:scaleX(0.8455);-webkit-text-stroke:0.4px #252423;">189.24</div>
<div class="t" style="left:483.33px;top:616.78px;font-size:23.07px;font-family:'Liberation Mono', monospace;color:#252423;transform:scaleX(0.8557);-webkit-text-stroke:0.4px #252423;">3.38</div>
<div class="t" style="left:81.00px;top:648.48px;font-size:21.80px;font-family:'Liberation Sans', sans-serif;color:#252423;transform:scaleX(0.9345);">Accessories</div>
<div class="t" style="left:314.48px;top:649.28px;font-size:23.07px;font-family:'Liberation Mono', monospace;color:#252423;transform:scaleX(0.8455);-webkit-text-stroke:0.4px #252423;">167.38</div>
<div class="t" style="left:471.91px;top:649.28px;font-size:23.07px;font-family:'Liberation Mono', monospace;color:#252423;transform:scaleX(0.8496);-webkit-text-stroke:0.4px #252423;">41.94</div>
<div class="t" style="left:81.00px;top:680.98px;font-size:21.80px;font-family:'Liberation Sans', sans-serif;color:#252423;transform:scaleX(0.9426);">Copiers</div>
<div class="t" style="left:314.48px;top:681.78px;font-size:23.07px;font-family:'Liberation Mono', monospace;color:#252423;transform:scaleX(0.8455);-webkit-text-stroke:0.4px #252423;">149.53</div>
<div class="t" style="left:471.91px;top:681.78px;font-size:23.07px;font-family:'Liberation Mono', monospace;color:#252423;transform:scaleX(0.8496);-webkit-text-stroke:0.4px #252423;">55.62</div>
<div class="t" style="left:72.00px;top:714.73px;font-size:21.80px;font-family:'Liberation Sans', sans-serif;color:#111;font-weight:bold;transform:scaleX(0.9078);">Furniture</div>
<div class="r" style="left:46.00px;top:716.80px;width:15.50px;height:15.50px;border:1.5px solid #444;box-sizing:border-box;background:#fff"></div>
<div class="r" style="left:49.50px;top:723.90px;width:8.50px;height:1.50px;background:#333"></div>
<div class="t" style="left:314.12px;top:715.18px;font-size:23.52px;font-family:'Liberation Mono', monospace;color:#111;font-weight:bold;transform:scaleX(0.8451);">742.00</div>
<div class="t" style="left:470.79px;top:715.18px;font-size:23.52px;font-family:'Liberation Mono', monospace;color:#111;font-weight:bold;transform:scaleX(0.8491);">18.45</div>
<div class="t" style="left:641.70px;top:715.18px;font-size:23.52px;font-family:'Liberation Mono', monospace;color:#111;font-weight:bold;transform:scaleX(0.8384);">18/6/2024</div>
<div class="t" style="left:786.20px;top:715.18px;font-size:23.52px;font-family:'Liberation Mono', monospace;color:#111;font-weight:bold;transform:scaleX(0.8384);">23/6/2024</div>
<div class="t" style="left:81.00px;top:748.48px;font-size:21.80px;font-family:'Liberation Sans', sans-serif;color:#252423;transform:scaleX(0.9470);">Chairs</div>
<div class="t" style="left:314.48px;top:749.28px;font-size:23.07px;font-family:'Liberation Mono', monospace;color:#252423;transform:scaleX(0.8455);-webkit-text-stroke:0.4px #252423;">328.45</div>
<div class="t" style="left:471.91px;top:749.28px;font-size:23.07px;font-family:'Liberation Mono', monospace;color:#252423;transform:scaleX(0.8496);-webkit-text-stroke:0.4px #252423;">26.59</div>
<div class="t" style="left:81.00px;top:780.98px;font-size:21.80px;font-family:'Liberation Sans', sans-serif;color:#252423;transform:scaleX(0.9470);">Tables</div>
<div class="t" style="left:314.48px;top:781.78px;font-size:23.07px;font-family:'Liberation Mono', monospace;color:#252423;transform:scaleX(0.8455);-webkit-text-stroke:0.4px #252423;">206.97</div>
<div class="t" style="left:460.48px;top:781.78px;font-size:23.07px;font-family:'Liberation Mono', monospace;color:#252423;transform:scaleX(0.8455);-webkit-text-stroke:0.4px #252423;">-17.73</div>
<div class="t" style="left:81.00px;top:813.48px;font-size:21.80px;font-family:'Liberation Sans', sans-serif;color:#252423;transform:scaleX(0.9359);">Bookcases</div>
<div class="t" style="left:314.48px;top:814.28px;font-size:23.07px;font-family:'Liberation Mono', monospace;color:#252423;transform:scaleX(0.8455);-webkit-text-stroke:0.4px #252423;">114.88</div>
<div class="t" style="left:471.91px;top:814.28px;font-size:23.07px;font-family:'Liberation Mono', monospace;color:#252423;transform:scaleX(0.8496);-webkit-text-stroke:0.4px #252423;">-3.47</div>
<div class="t" style="left:81.00px;top:845.98px;font-size:21.80px;font-family:'Liberation Sans', sans-serif;color:#252423;transform:scaleX(0.9351);">Furnishings</div>
<div class="t" style="left:325.91px;top:846.78px;font-size:23.07px;font-family:'Liberation Mono', monospace;color:#252423;transform:scaleX(0.8496);-webkit-text-stroke:0.4px #252423;">91.71</div>
<div class="t" style="left:471.91px;top:846.78px;font-size:23.07px;font-family:'Liberation Mono', monospace;color:#252423;transform:scaleX(0.8496);-webkit-text-stroke:0.4px #252423;">13.06</div>
<div class="t" style="left:72.00px;top:879.73px;font-size:21.80px;font-family:'Liberation Sans', sans-serif;color:#111;font-weight:bold;transform:scaleX(0.9007);">Office Supplies</div>
<div class="r" style="left:46.00px;top:881.80px;width:15.50px;height:15.50px;border:1.5px solid #444;box-sizing:border-box;background:#fff"></div>
<div class="r" style="left:49.50px;top:888.90px;width:8.50px;height:1.50px;background:#333"></div>
<div class="t" style="left:314.12px;top:880.18px;font-size:23.52px;font-family:'Liberation Mono', monospace;color:#111;font-weight:bold;transform:scaleX(0.8451);">719.05</div>
<div class="t" style="left:459.12px;top:880.18px;font-size:23.52px;font-family:'Liberation Mono', monospace;color:#111;font-weight:bold;transform:scaleX(0.8451);">122.49</div>
<div class="t" style="left:641.70px;top:880.18px;font-size:23.52px;font-family:'Liberation Mono', monospace;color:#111;font-weight:bold;transform:scaleX(0.8384);">25/6/2024</div>
<div class="t" style="left:786.20px;top:880.18px;font-size:23.52px;font-family:'Liberation Mono', monospace;color:#111;font-weight:bold;transform:scaleX(0.8384);">30/6/2024</div>
<div class="t" style="left:81.00px;top:913.48px;font-size:21.80px;font-family:'Liberation Sans', sans-serif;color:#252423;transform:scaleX(0.9423);">Storage</div>
<div class="t" style="left:314.48px;top:914.28px;font-size:23.07px;font-family:'Liberation Mono', monospace;color:#252423;transform:scaleX(0.8455);-webkit-text-stroke:0.4px #252423;">223.84</div>
<div class="t" style="left:471.91px;top:914.28px;font-size:23.07px;font-family:'Liberation Mono', monospace;color:#252423;transform:scaleX(0.8496);-webkit-text-stroke:0.4px #252423;">21.28</div>
<div class="t" style="left:81.00px;top:945.98px;font-size:21.80px;font-family:'Liberation Sans', sans-serif;color:#252423;transform:scaleX(0.9430);">Binders</div>
<div class="t" style="left:314.48px;top:946.78px;font-size:23.07px;font-family:'Liberation Mono', monospace;color:#252423;transform:scaleX(0.8455);-webkit-text-stroke:0.4px #252423;">203.41</div>
<div class="t" style="left:471.91px;top:946.78px;font-size:23.07px;font-family:'Liberation Mono', monospace;color:#252423;transform:scaleX(0.8496);-webkit-text-stroke:0.4px #252423;">30.22</div>
<div class="t" style="left:81.00px;top:978.48px;font-size:21.80px;font-family:'Liberation Sans', sans-serif;color:#252423;transform:scaleX(0.9359);">Appliances</div>
<div class="t" style="left:314.48px;top:979.28px;font-size:23.07px;font-family:'Liberation Mono', monospace;color:#252423;transform:scaleX(0.8455);-webkit-text-stroke:0.4px #252423;">107.53</div>
<div class="t" style="left:471.91px;top:979.28px;font-size:23.07px;font-family:'Liberation Mono', monospace;color:#252423;transform:scaleX(0.8496);-webkit-text-stroke:0.4px #252423;">18.14</div>
<div class="t" style="left:81.00px;top:1010.98px;font-size:21.80px;font-family:'Liberation Sans', sans-serif;color:#252423;transform:scaleX(0.9492);">Paper</div>
<div class="t" style="left:325.91px;top:1011.78px;font-size:23.07px;font-family:'Liberation Mono', monospace;color:#252423;transform:scaleX(0.8496);-webkit-text-stroke:0.4px #252423;">78.48</div>
<div class="t" style="left:471.91px;top:1011.78px;font-size:23.07px;font-family:'Liberation Mono', monospace;color:#252423;transform:scaleX(0.8496);-webkit-text-stroke:0.4px #252423;">34.05</div>
<div class="t" style="left:81.00px;top:1043.48px;font-size:21.80px;font-family:'Liberation Sans', sans-serif;color:#252423;transform:scaleX(0.9403);">Supplies</div>
<div class="t" style="left:325.91px;top:1044.28px;font-size:23.07px;font-family:'Liberation Mono', monospace;color:#252423;transform:scaleX(0.8496);-webkit-text-stroke:0.4px #252423;">46.67</div>
<div class="t" style="left:471.91px;top:1044.28px;font-size:23.07px;font-family:'Liberation Mono', monospace;color:#252423;transform:scaleX(0.8496);-webkit-text-stroke:0.4px #252423;">-1.19</div>
<div class="t" style="left:81.00px;top:1075.98px;font-size:21.80px;font-family:'Liberation Sans', sans-serif;color:#252423;transform:scaleX(0.9810);">Art</div>
<div class="t" style="left:325.91px;top:1076.78px;font-size:23.07px;font-family:'Liberation Mono', monospace;color:#252423;transform:scaleX(0.8496);-webkit-text-stroke:0.4px #252423;">27.12</div>
<div class="t" style="left:483.33px;top:1076.78px;font-size:23.07px;font-family:'Liberation Mono', monospace;color:#252423;transform:scaleX(0.8557);-webkit-text-stroke:0.4px #252423;">6.53</div>
<div class="t" style="left:81.00px;top:1108.48px;font-size:21.80px;font-family:'Liberation Sans', sans-serif;color:#252423;transform:scaleX(0.9367);">Envelopes</div>
<div class="t" style="left:325.91px;top:1109.28px;font-size:23.07px;font-family:'Liberation Mono', monospace;color:#252423;transform:scaleX(0.8496);-webkit-text-stroke:0.4px #252423;">16.48</div>
<div class="t" style="left:483.33px;top:1109.28px;font-size:23.07px;font-family:'Liberation Mono', monospace;color:#252423;transform:scaleX(0.8557);-webkit-text-stroke:0.4px #252423;">6.96</div>
<div class="t" style="left:81.00px;top:1140.98px;font-size:21.80px;font-family:'Liberation Sans', sans-serif;color:#252423;transform:scaleX(0.9465);">Labels</div>
<div class="t" style="left:325.91px;top:1141.78px;font-size:23.07px;font-family:'Liberation Mono', monospace;color:#252423;transform:scaleX(0.8496);-webkit-text-stroke:0.4px #252423;">12.49</div>
<div class="t" style="left:483.33px;top:1141.78px;font-size:23.07px;font-family:'Liberation Mono', monospace;color:#252423;transform:scaleX(0.8557);-webkit-text-stroke:0.4px #252423;">5.55</div>
<div class="t" style="left:81.00px;top:1173.48px;font-size:21.80px;font-family:'Liberation Sans', sans-serif;color:#252423;transform:scaleX(0.9375);">Fasteners</div>
<div class="t" style="left:337.33px;top:1174.28px;font-size:23.07px;font-family:'Liberation Mono', monospace;color:#252423;transform:scaleX(0.8557);-webkit-text-stroke:0.4px #252423;">3.02</div>
<div class="t" style="left:483.33px;top:1174.28px;font-size:23.07px;font-family:'Liberation Mono', monospace;color:#252423;transform:scaleX(0.8557);-webkit-text-stroke:0.4px #252423;">0.95</div>
<svg class="r" style="left:0;top:0" width="2304" height="1301" viewBox="0 0 2304 1301" fill="none" stroke-linecap="butt"><rect x="37.6" y="90.7" width="31.6" height="30.9" stroke="#9a9a9a" fill="#fff" stroke-width="1.4" /><rect x="37.6" y="101" width="31.6" height="10.5" stroke="#8eb0d6" fill="#b7d3ef" stroke-width="1.4" /><line x1="106.4" y1="99" x2="122.9" y2="99" stroke="#7fa0c8" stroke-width="1.4" /><line x1="114.6" y1="91" x2="114.6" y2="107" stroke="#7fa0c8" stroke-width="1.4" /><line x1="108.6" y1="121.3" x2="134.6" y2="95.3" stroke="#9a9a9a" stroke-width="1.4" /><line x1="121.6" y1="115" x2="137.6" y2="115" stroke="#7fa0c8" stroke-width="1.4" /><path d="M193.2 90.5 H217.5 V114.8" stroke="#323130" fill="none" stroke-width="1.6" /><path d="M189.7 94.4 H213.6 V118.7" stroke="#323130" fill="none" stroke-width="1.6" /><rect x="186" y="98.2" width="24" height="23.4" stroke="#323130" fill="#fff" stroke-width="1.6" /><rect x="186" y="105" width="24" height="9.3" stroke="#1c4f8f" fill="#74aee8" stroke-width="1.5" /><path d="M313.3 91.2 H324.4 L318 103.8 H328.1 L310.4 119.4 H304.6 L313.5 108 H305 Z" stroke="#1e5aa8" fill="#74aee8" stroke-width="1.5" stroke-linejoin="miter"/><path d="M407.5 114.4 H399.8 V91 H430.3 V114.4 H427.5" stroke="#323130" fill="none" stroke-width="1.6" /><rect x="410.6" y="98.8" width="14.8" height="22.8" stroke="#323130" fill="#fff" stroke-width="1.6" /><rect x="413.6" y="101.8" width="8.9" height="4.6" stroke="#1c4f8f" fill="#74aee8" stroke-width="1.2" /><circle cx="414" cy="110.2" r="0.8" stroke="none" fill="#444" stroke-width="0" /><circle cx="418" cy="110.2" r="0.8" stroke="none" fill="#444" stroke-width="0" /><circle cx="422" cy="110.2" r="0.8" stroke="none" fill="#444" stroke-width="0" /><circle cx="414" cy="113.7" r="0.8" stroke="none" fill="#444" stroke-width="0" /><circle cx="418" cy="113.7" r="0.8" stroke="none" fill="#444" stroke-width="0" /><circle cx="422" cy="113.7" r="0.8" stroke="none" fill="#444" stroke-width="0" /><circle cx="414" cy="117.2" r="0.8" stroke="none" fill="#444" stroke-width="0" /><circle cx="418" cy="117.2" r="0.8" stroke="none" fill="#444" stroke-width="0" /><circle cx="422" cy="117.2" r="0.8" stroke="none" fill="#444" stroke-width="0" /><line x1="497.6" y1="90" x2="497.6" y2="122.5" stroke="#323130" stroke-width="1.6" stroke-dasharray="3 2.4"/><line x1="481.5" y1="107" x2="493.5" y2="107" stroke="#1e5aa8" stroke-width="1.6" /><path d="M489 100.8 L494.5 107 L489 113.2" stroke="#1e5aa8" fill="none" stroke-width="1.6" /><line x1="501.5" y1="107" x2="514.5" y2="107" stroke="#1e5aa8" stroke-width="1.6" /><path d="M507 100.8 L501.5 107 L507 113.2" stroke="#1e5aa8" fill="none" stroke-width="1.6" /><line x1="577.3" y1="92.8" x2="610.1" y2="92.8" stroke="#323130" stroke-width="1.8" /><line x1="577.3" y1="120" x2="610.1" y2="120" stroke="#323130" stroke-width="1.8" /><line x1="577.3" y1="106" x2="610.1" y2="106" stroke="#1e5aa8" stroke-width="1.6" /><circle cx="595.3" cy="106" r="4.8" stroke="#1e5aa8" fill="#74aee8" stroke-width="1.7" /><line x1="661.6" y1="99" x2="678" y2="99" stroke="#1c4f8f" stroke-width="1.6" /><line x1="669.8" y1="91" x2="669.8" y2="107" stroke="#1c4f8f" stroke-width="1.6" /><line x1="663.4" y1="121.4" x2="689.4" y2="95.4" stroke="#323130" stroke-width="1.6" /><line x1="676.7" y1="115.3" x2="692.6" y2="115.3" stroke="#1c4f8f" stroke-width="1.6" /><path d="M752.5 114 H738.3 V91.4 H768.2 V114 H762" stroke="#9a9a9a" fill="none" stroke-width="1.4" /><line x1="757.8" y1="105.5" x2="757.8" y2="121.5" stroke="#7fa0c8" stroke-width="1.4" /><line x1="753" y1="105.5" x2="762.6" y2="105.5" stroke="#7fa0c8" stroke-width="1.4" /><line x1="753" y1="121.5" x2="762.6" y2="121.5" stroke="#7fa0c8" stroke-width="1.4" /><path d="M844.5 115 V90.6 H868" stroke="#323130" fill="none" stroke-width="1.6" /><path d="M848.5 118.6 V94.5 H868" stroke="#323130" fill="none" stroke-width="1.6" /><rect x="852.3" y="98.3" width="24.2" height="23.3" stroke="#323130" fill="#fff" stroke-width="1.6" /><rect x="859.5" y="98.3" width="10.1" height="23.3" stroke="#1e5aa8" fill="#74aee8" stroke-width="1.5" /><circle cx="880.1" cy="99.5" r="14.2" stroke="none" fill="#fff" stroke-width="0" /><circle cx="880.1" cy="99.5" r="13.2" stroke="none" fill="#3b78c8" stroke-width="0" /><text x="880.3" y="106.6" font-family="Liberation Sans" font-weight="bold" font-size="19.5" fill="#fff" text-anchor="middle">2</text><path d="M962.1 90 V119.8 H991.4" stroke="#9a9a9a" fill="none" stroke-width="1.5" /><path d="M962.1 111 L968.7 105.2 L974.4 110.5 L983.6 98.3 L991.1 103.1" stroke="#7fa0c8" fill="none" stroke-width="1.5" /><rect x="1072.2" y="101.3" width="3.9" height="20.3" stroke="#9a9a9a" fill="none" stroke-width="1.4" /><path d="M1079.6 118 V95.6 H1083.7 V118" stroke="#9a9a9a" fill="none" stroke-width="1.4" /><path d="M1087.7 116 V90.4 H1091.9 V114" stroke="#9a9a9a" fill="none" stroke-width="1.4" /><path d="M1095.6 116 V95.6 H1099.8 V118" stroke="#9a9a9a" fill="none" stroke-width="1.4" /><line x1="1079" y1="118.4" x2="1103.4" y2="118.4" stroke="#7fa0c8" stroke-width="1.4" /><circle cx="1091" cy="118.4" r="3.8" stroke="#7fa0c8" fill="#b7d3ef" stroke-width="1.4" /><rect x="1173.2" y="90.9" width="20.7" height="19.7" stroke="none" fill="#b7d3ef" stroke-width="0" /><rect x="1162.9" y="90.9" width="31" height="30.5" stroke="#9a9a9a" fill="none" stroke-width="1.5" /><line x1="1173.2" y1="90.9" x2="1173.2" y2="121.4" stroke="#9a9a9a" stroke-width="1.5" /><line x1="1162.9" y1="110.6" x2="1193.9" y2="110.6" stroke="#9a9a9a" stroke-width="1.5" /><path d="M1247.8 107.1 A11.4 11.4 0 1 0 1236.4 118.5" stroke="#323130" fill="none" stroke-width="1.5" /><line x1="1236.4" y1="92" x2="1236.4" y2="99" stroke="#323130" stroke-width="1.5" /><line x1="1221.5" y1="107.1" x2="1228.5" y2="107.1" stroke="#323130" stroke-width="1.5" /><line x1="1236.4" y1="115" x2="1236.4" y2="122" stroke="#323130" stroke-width="1.5" /><line x1="1244" y1="107.1" x2="1252" y2="107.1" stroke="#323130" stroke-width="1.5" /><circle cx="1236.4" cy="107.1" r="3.3" stroke="#1e5aa8" fill="#74aee8" stroke-width="1.5" /><path d="M1240.7 115.5 L1244 118.6 L1249.5 111.8" stroke="#1c4f8f" fill="none" stroke-width="1.5" /><path d="M1282.5 93.5 L1286 90.5 L1291.5 96 L1290 98 L1309.5 117.5 A2.6 2.6 0 0 1 1305.8 121.2 L1286.3 101.7 L1284.3 102.5 L1280.8 97 Z" stroke="#9a9a9a" fill="none" stroke-width="1.4" /><path d="M1298 103.5 L1284.5 117 A3 3 0 0 0 1288.5 121 L1302 107.5 A7.5 7.5 0 0 0 1312.5 97 L1308 101.5 L1304 97.5 L1308.5 93 A7.5 7.5 0 0 0 1298 103.5 Z" stroke="#7fa0c8" fill="#f3f3f3" stroke-width="1.6" /><path d="M1374.2 121.6 H1365.7 V90.7 H1382.3 L1391.4 98.3 V102.5" stroke="#9a9a9a" fill="none" stroke-width="1.5" /><path d="M1382.3 90.7 V98.3 H1391.4" stroke="#9a9a9a" fill="none" stroke-width="1.4" /><circle cx="1387.6" cy="110.2" r="5.3" stroke="#7fa0c8" fill="none" stroke-width="1.5" /><line x1="1383.8" y1="114" x2="1375.5" y2="121.3" stroke="#7fa0c8" stroke-width="1.5" /><rect x="1477.7" y="99.9" width="19.7" height="19.5" stroke="#323130" fill="none" stroke-width="1.6" /><rect x="1470.5" y="92.8" width="19.9" height="19.2" stroke="#1e5aa8" fill="none" stroke-width="1.6" /><rect x="1478.5" y="100.7" width="11.1" height="10.5" stroke="#323130" fill="#74aee8" stroke-width="1.4" /><path d="M1595.9 105.3 V101.6 H1576.8 L1585 111.3 L1576.8 121 H1595.9 V117.4" stroke="#323130" fill="none" stroke-width="1.6" /><path d="M1591.48 96.71 L1592.87 97.53 L1592.09 99.41 L1590.53 99.02 L1589.94 99.62 L1590.34 101.18 L1588.46 101.96 L1587.63 100.58 L1586.79 100.58 L1585.97 101.97 L1584.09 101.19 L1584.48 99.63 L1583.88 99.04 L1582.32 99.44 L1581.54 97.56 L1582.92 96.73 L1582.92 95.89 L1581.53 95.07 L1582.31 93.19 L1583.87 93.58 L1584.46 92.98 L1584.06 91.42 L1585.94 90.64 L1586.77 92.02 L1587.61 92.02 L1588.43 90.63 L1590.31 91.41 L1589.92 92.97 L1590.52 93.56 L1592.08 93.16 L1592.86 95.04 L1591.48 95.87 Z M1584.9 96.3 A2.3 2.3 0 1 0 1589.5 96.3 A2.3 2.3 0 1 0 1584.9 96.3 Z" stroke="none" fill="#1c4f8f" stroke-width="0" fill-rule="evenodd"/><path d="M1691.2 95 V116 A12 4.8 0 0 0 1706 120.4" stroke="#323130" fill="none" stroke-width="1.7" /><ellipse cx="1703.2" cy="95" rx="12" ry="4.2" stroke="#323130" fill="none" stroke-width="1.7"/><line x1="1715.2" y1="95" x2="1715.2" y2="104" stroke="#323130" stroke-width="1.7" /><path d="M1720.65 114.10 L1722.67 115.35 L1721.52 118.15 L1719.21 117.62 L1718.05 118.79 L1718.59 121.09 L1715.80 122.26 L1714.54 120.25 L1712.90 120.25 L1711.65 122.27 L1708.85 121.12 L1709.38 118.81 L1708.21 117.65 L1705.91 118.19 L1704.74 115.40 L1706.75 114.14 L1706.75 112.50 L1704.73 111.25 L1705.88 108.45 L1708.19 108.98 L1709.35 107.81 L1708.81 105.51 L1711.60 104.34 L1712.86 106.35 L1714.50 106.35 L1715.75 104.33 L1718.55 105.48 L1718.02 107.79 L1719.19 108.95 L1721.49 108.41 L1722.66 111.20 L1720.65 112.46 Z M1709.1 113.3 A4.6 4.6 0 1 0 1718.3 113.3 A4.6 4.6 0 1 0 1709.1 113.3 Z" stroke="none" fill="#1e5aa8" stroke-width="0" fill-rule="evenodd"/><path d="M908.4 55.8 H899 V24.8 H929.7 V31.9" stroke="#323130" fill="none" stroke-width="1.8" /><line x1="914.1" y1="24.8" x2="914.1" y2="40.5" stroke="#323130" stroke-width="1.8" /><path d="M914.5 55 L913.6 50 L926 37.6 A3 3 0 0 1 930.3 41.8 L917.9 54.2 Z" stroke="#0f4c9c" fill="none" stroke-width="2.2" /><line x1="922.5" y1="41.3" x2="926.5" y2="45.3" stroke="#0f4c9c" stroke-width="1.8" /><path d="M933.1 36.6 L939.5 43 L945.9 36.6" stroke="#222" fill="none" stroke-width="1.8" /><line x1="1222.9" y1="33.3" x2="1239.5" y2="33.3" stroke="#7ea2cf" stroke-width="1.4" /><line x1="1231" y1="25.7" x2="1231" y2="41.7" stroke="#7ea2cf" stroke-width="1.4" /><path d="M1242.4 28.4 H1252.7 V49.3 H1233.8 L1230.2 56.2 L1226.7 49.3 H1221.3 V41.5" stroke="#9a9a9a" fill="none" stroke-width="1.4" /><path d="M1282.6 38.2 L1289.1 44.7 L1295.6 38.2" stroke="#222" fill="none" stroke-width="1.8" /><path d="M1375.9 53.9 A17.4 17.4 0 1 1 1404.6 53.9" stroke="#111" fill="none" stroke-width="1.8" /><circle cx="1390.2" cy="41.7" r="5.9" stroke="#111" fill="none" stroke-width="1.8" /><path d="M1378.1 57.2 Q1390.2 47 1402.4 57.2 Q1390.2 67 1378.1 57.2 Z" stroke="#111" fill="none" stroke-width="1.8" /><path d="M1426.9 40.6 L1433.4 47.2 L1439.9 40.6" stroke="#222" fill="none" stroke-width="1.8" /><path d="M30.6 255.2 L26.1 259.3 L30.6 263.4 M26.1 259.3 H36.9 A8 8 0 1 1 28.9 267.3" stroke="#a8a8a8" fill="none" stroke-width="1.3" /><path d="M78.3 255.2 H84.9 L81 263 H87.7 L74.4 275.5 H72.8 L77.5 267.5 H72 Z" stroke="#a8a8a8" fill="none" stroke-width="1.3" /><path d="M1630.3 266.3 L1636.4 272.3 L1650.4 257.8" stroke="#b3b3b3" fill="none" stroke-width="1.4" /><line x1="1679.5" y1="257.5" x2="1695.6" y2="273.2" stroke="#b3b3b3" stroke-width="1.4" /><line x1="1695.6" y1="257.5" x2="1679.5" y2="273.2" stroke="#b3b3b3" stroke-width="1.4" /><path d="M1737.3 255.6 L1744.6 262.8 L1741.5 264.5 L1737.5 268.5 L1735.6 273 L1726.3 263.7 L1730.8 261.8 L1734.8 257.8 Z" stroke="#1b1b1b" fill="#1b1b1b" stroke-width="1.2" /><line x1="1731.5" y1="268.5" x2="1724.4" y2="275.5" stroke="#1b1b1b" stroke-width="1.5" /><path d="M2148.7 10.2 H2180.3 V12.3 L2167.8 24.1 V36.6 H2161.2 V24.1 L2148.7 12.3 Z" stroke="#666" fill="none" stroke-width="1.3" /><path d="M2219.9 13.7 H2207 V35.9 H2233.4 V27.2" stroke="#666" fill="none" stroke-width="1.4" /><path d="M2207 27.9 H2219.9 V35.9" stroke="#666" fill="none" stroke-width="1.4" /><line x1="2223" y1="24.1" x2="2233" y2="14.1" stroke="#666" stroke-width="1.4" /><path d="M2224.4 13.7 H2233.4 V22.7" stroke="#666" fill="none" stroke-width="1.4" /><circle cx="2263.6" cy="22.4" r="2.5" stroke="none" fill="#666" stroke-width="0" /><circle cx="2275.8" cy="22.4" r="2.5" stroke="none" fill="#666" stroke-width="0" /><circle cx="2287.8" cy="22.4" r="2.5" stroke="none" fill="#666" stroke-width="0" /><path d="M1805 56.5 L1794 66.8 L1805 77.1" stroke="#333" fill="none" stroke-width="1.6" /><circle cx="2135.4" cy="63.1" r="10.2" stroke="#333" fill="none" stroke-width="1.3" /><circle cx="2135.4" cy="59.2" r="0.9" stroke="none" fill="#333" stroke-width="0" /><line x1="2135.4" y1="61.6" x2="2135.4" y2="68.2" stroke="#333" stroke-width="1.3" /><line x1="2253.8" y1="61" x2="2274" y2="81.3" stroke="#252423" stroke-width="1.8" /><line x1="2274" y1="61" x2="2253.8" y2="81.3" stroke="#252423" stroke-width="1.8" /><line x1="2229.9" y1="284.1" x2="2246.8" y2="267.7" stroke="#222" stroke-width="1.5" /><path d="M2241.1 267.4 H2247.1 V272.6" stroke="#222" fill="none" stroke-width="1.5" /><path d="M2229.6 279.2 V284.4 H2235.6" stroke="#222" fill="none" stroke-width="1.5" /><path d="M1796 510.3 C1795.5 506 1791.8 505 1791.8 500.8 A7 7 0 1 1 1805.8 500.8 C1805.8 505 1802.1 506 1801.6 510.3 Z" stroke="#555" fill="none" stroke-width="1.3" /><path d="M1796 510.3 V513 A2 2 0 0 0 1798 515 H1799.6 A2 2 0 0 0 1801.6 513 V510.3" stroke="#555" fill="none" stroke-width="1.3" /><path d="M2222.3 675.3 L2233.2 686.4 L2244.1 675.3" stroke="#333" fill="none" stroke-width="1.5" /><line x1="2248.5" y1="838.5" x2="2260.5" y2="826.5" stroke="#333" stroke-width="1.4" /><line x1="2254" y1="838.5" x2="2260.5" y2="832" stroke="#333" stroke-width="1.4" /><line x1="401.5" y1="433.5" x2="417" y2="433.5" stroke="#555" stroke-width="1.4" /><line x1="401.5" y1="438.5" x2="417" y2="438.5" stroke="#555" stroke-width="1.4" /><line x1="401.5" y1="443.5" x2="417" y2="443.5" stroke="#555" stroke-width="1.4" /><line x1="401.5" y1="448.5" x2="417" y2="448.5" stroke="#555" stroke-width="1.4" /><line x1="402" y1="433" x2="417" y2="433" stroke="#555" stroke-width="1.4" /><line x1="763.5" y1="433.5" x2="780" y2="433.5" stroke="#555" stroke-width="1.4" /><line x1="763.5" y1="438.5" x2="780" y2="438.5" stroke="#555" stroke-width="1.4" /><line x1="763.5" y1="443.5" x2="780" y2="443.5" stroke="#555" stroke-width="1.4" /><line x1="763.5" y1="448.5" x2="780" y2="448.5" stroke="#555" stroke-width="1.4" /><line x1="12.5" y1="720.5" x2="28" y2="720.5" stroke="#555" stroke-width="1.4" /><line x1="12.5" y1="725" x2="28" y2="725" stroke="#555" stroke-width="1.4" /><line x1="12.5" y1="729.5" x2="28" y2="729.5" stroke="#555" stroke-width="1.4" /><line x1="12.5" y1="734" x2="28" y2="734" stroke="#555" stroke-width="1.4" /><rect x="544.5" y="433.5" width="18.5" height="15.5" stroke="#555" fill="none" stroke-width="1.4" /><line x1="544.5" y1="437.5" x2="563" y2="437.5" stroke="#555" stroke-width="1.6" /><line x1="547.5" y1="432" x2="547.5" y2="435" stroke="#555" stroke-width="1.4" /><line x1="560" y1="432" x2="560" y2="435" stroke="#555" stroke-width="1.4" /><line x1="548" y1="441" x2="548" y2="447" stroke="#888" stroke-width="1" stroke-dasharray="1 1"/><line x1="551.3" y1="441" x2="551.3" y2="447" stroke="#888" stroke-width="1" stroke-dasharray="1 1"/><line x1="554.6" y1="441" x2="554.6" y2="447" stroke="#888" stroke-width="1" stroke-dasharray="1 1"/><line x1="557.9" y1="441" x2="557.9" y2="447" stroke="#888" stroke-width="1" stroke-dasharray="1 1"/><path d="M1188.99 1272.05 L1191.88 1273.90 L1190.40 1277.49 L1187.04 1276.77 L1184.82 1279.01 L1185.56 1282.36 L1181.97 1283.86 L1180.10 1280.98 L1176.95 1280.99 L1175.10 1283.88 L1171.51 1282.40 L1172.23 1279.04 L1169.99 1276.82 L1166.64 1277.56 L1165.14 1273.97 L1168.02 1272.10 L1168.01 1268.95 L1165.12 1267.10 L1166.60 1263.51 L1169.96 1264.23 L1172.18 1261.99 L1171.44 1258.64 L1175.03 1257.14 L1176.90 1260.02 L1180.05 1260.01 L1181.90 1257.12 L1185.49 1258.60 L1184.77 1261.96 L1187.01 1264.18 L1190.36 1263.44 L1191.86 1267.03 L1188.98 1268.90 Z" stroke="#444" fill="#fff" stroke-width="1.6" stroke-linejoin="round"/><circle cx="1178.5" cy="1270.5" r="5.4" stroke="#1f5fae" fill="#fff" stroke-width="1.8" /><line x1="1213" y1="1272.3" x2="1232" y2="1272.3" stroke="#333" stroke-width="1.6" /><line x1="1357" y1="1272.5" x2="1376" y2="1272.5" stroke="#333" stroke-width="1.6" /><line x1="1366.5" y1="1263" x2="1366.5" y2="1282" stroke="#333" stroke-width="1.6" /><line x1="1547.5" y1="1259.5" x2="1547.5" y2="1277" stroke="#9a9a9a" stroke-width="2.2" /><path d="M1565 1260 L1556 1268.5 L1565 1277" stroke="#9a9a9a" fill="none" stroke-width="2" /><path d="M1588 1260 L1578.5 1268.5 L1588 1277" stroke="#9a9a9a" fill="none" stroke-width="2" /><path d="M1715.5 1260 L1725 1268.5 L1715.5 1277" stroke="#9a9a9a" fill="none" stroke-width="2" /><path d="M1738 1260 L1747 1268.5 L1738 1277" stroke="#9a9a9a" fill="none" stroke-width="2" /><line x1="1756" y1="1259.5" x2="1756" y2="1277" stroke="#9a9a9a" stroke-width="2.2" /><path d="M1842.50 148.60 L1842.50 144.20 M1842.50 148.60 L1846.68 147.24 M1842.50 148.60 L1845.09 152.16 M1842.50 148.60 L1839.91 152.16 M1842.50 148.60 L1838.32 147.24 " stroke="#a4262c" stroke-width="2" stroke-linecap="butt"/><path d="M1878.20 271.90 L1878.20 267.50 M1878.20 271.90 L1882.38 270.54 M1878.20 271.90 L1880.79 275.46 M1878.20 271.90 L1875.61 275.46 M1878.20 271.90 L1874.02 270.54 " stroke="#a4262c" stroke-width="2" stroke-linecap="butt"/><path d="M2006.90 621.40 L2006.90 617.00 M2006.90 621.40 L2011.08 620.04 M2006.90 621.40 L2009.49 624.96 M2006.90 621.40 L2004.31 624.96 M2006.90 621.40 L2002.72 620.04 " stroke="#a4262c" stroke-width="2" stroke-linecap="butt"/></svg>
</body></html>
